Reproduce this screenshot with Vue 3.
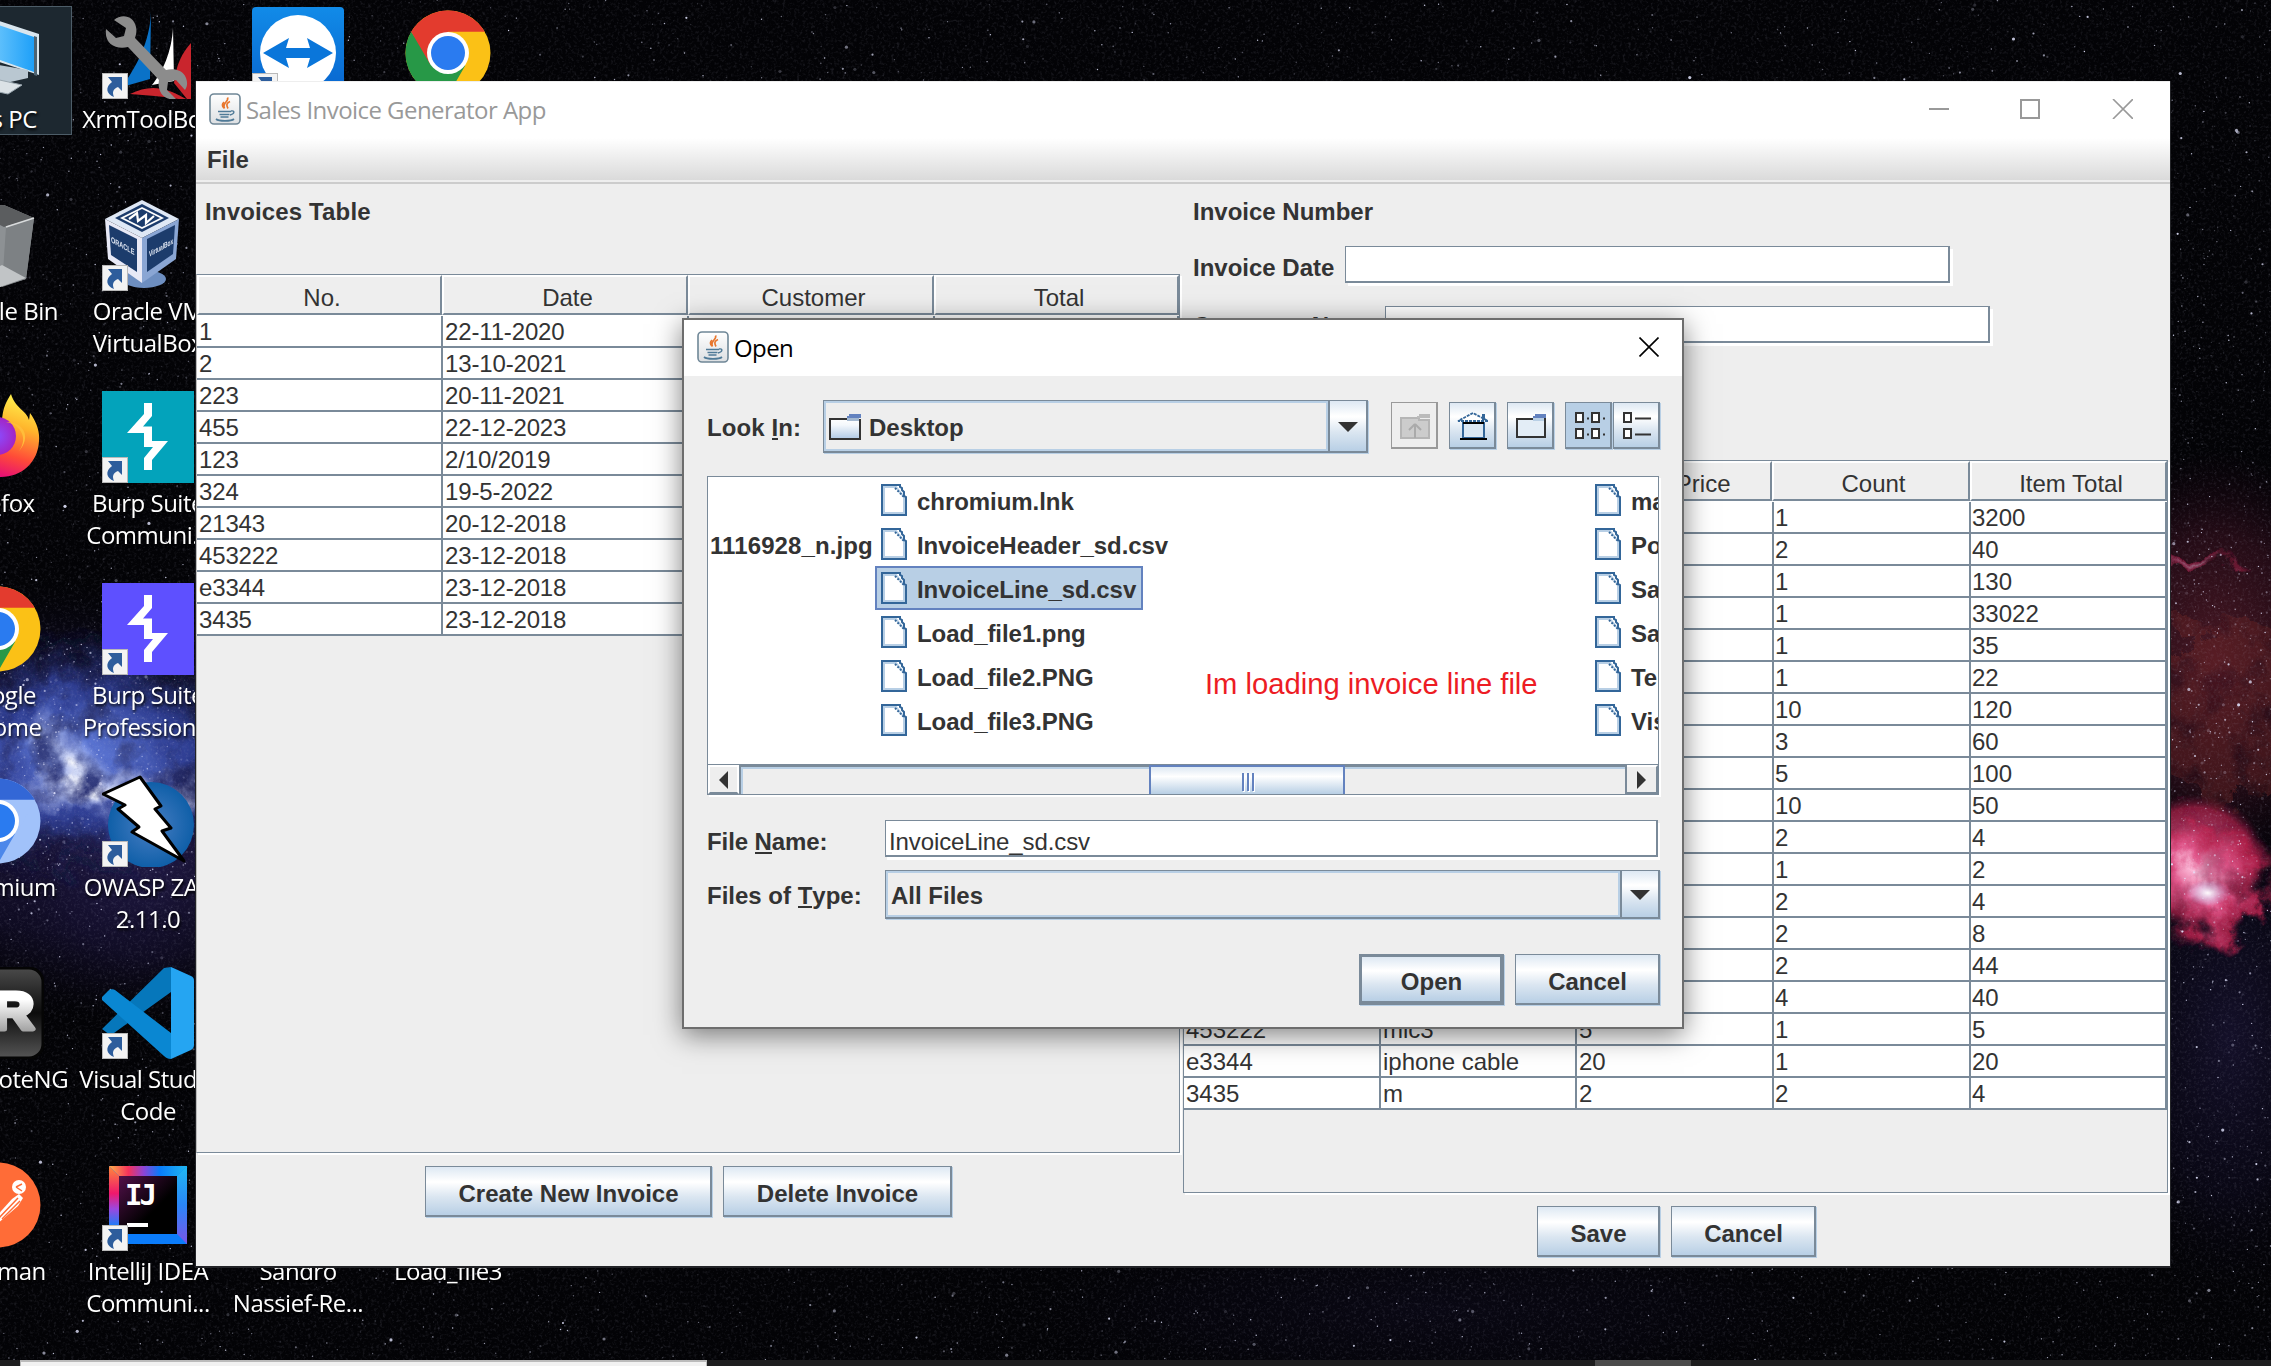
<script setup>
const invoices = [
  ['1', '22-11-2020'], ['2', '13-10-2021'], ['223', '20-11-2021'], ['455', '22-12-2023'],
  ['123', '2/10/2019'], ['324', '19-5-2022'], ['21343', '20-12-2018'], ['453222', '23-12-2018'],
  ['e3344', '23-12-2018'], ['3435', '23-12-2018'],
]
const items = [
  ['', '', '', '1', '3200'], ['', '', '', '2', '40'], ['', '', '', '1', '130'], ['', '', '', '1', '33022'],
  ['', '', '', '1', '35'], ['', '', '', '1', '22'], ['', '', '', '10', '120'], ['', '', '', '3', '60'],
  ['', '', '', '5', '100'], ['', '', '', '10', '50'], ['', '', '', '2', '4'], ['', '', '', '1', '2'],
  ['', '', '', '2', '4'], ['', '', '', '2', '8'], ['', '', '', '2', '44'], ['', '', '', '4', '40'],
  ['453222', 'mic3', '5', '1', '5'], ['e3344', 'iphone cable', '20', '1', '20'], ['3435', 'm', '2', '2', '4'],
]
const files = ['chromium.lnk', 'InvoiceHeader_sd.csv', 'InvoiceLine_sd.csv', 'Load_file1.png', 'Load_file2.PNG', 'Load_file3.PNG']
const moreFiles = ['ma', 'Po', 'Sa', 'Sa', 'Te', 'Vis']

const desktop = [
  { icon: 'pc', label: ['This PC'] }, { icon: 'bin', label: ['Recycle Bin'] }, { icon: 'firefox', label: ['Firefox'] },
  { icon: 'chrome', label: ['Google', 'Chrome'] }, { icon: 'chromium', label: ['Chromium'] },
  { icon: 'remote', label: ['mRemoteNG'] }, { icon: 'postman', label: ['Postman'] },
  { icon: 'xrm', label: ['XrmToolBox'], link: true }, { icon: 'vbox', label: ['Oracle VM', 'VirtualBox'], link: true },
  { icon: 'burp', color: '#03a3bb', label: ['Burp Suite', 'Communi...'], link: true },
  { icon: 'burp', color: '#5e50ff', label: ['Burp Suite', 'Profession...'], link: true },
  { icon: 'zap', label: ['OWASP ZAP', '2.11.0'], link: true }, { icon: 'code', label: ['Visual Studio', 'Code'], link: true },
  { icon: 'idea', label: ['IntelliJ IDEA', 'Communi...'], link: true },
  { icon: 'teamviewer', label: [], link: true }, {}, {}, {}, {}, {}, { label: ['Sandro', 'Nassief-Re...'] },
  { icon: 'chrome', label: [] }, {}, {}, {}, {}, {}, { label: ['Load_file3'] },
]

let seed = 77
const rnd = () => {
  seed = (seed * 1664525 + 1013904223) % 4294967296
  return seed / 4294967296
}
const zones = [[0, 0, 2271, 82, 420], [0, 82, 196, 1180, 900], [0, 640, 196, 240, 350], [2169, 82, 102, 1180, 560], [2169, 520, 102, 420, 220], [0, 1264, 2271, 96, 650]]
const stars = zones.flatMap(([x, y, w, h, n]) =>
  Array.from({ length: n }, () => {
    const b = rnd()
    return { x: x + rnd() * w, y: y + rnd() * h, r: b > 0.97 ? 1.6 : b > 0.85 ? 1.1 : 0.7, o: 0.15 + Math.pow(rnd(), 2) * 0.75 }
  }))
</script>

<template>
  <main class="screen">
    <svg class="sky" width="2271" height="1366" viewBox="0 0 2271 1366">
      <defs>
        <filter id="grain" x="0" y="0" width="100%" height="100%">
          <feTurbulence type="fractalNoise" baseFrequency="0.35" numOctaves="3" seed="4" />
          <feColorMatrix values="0 0 0 0 .55  0 0 0 0 .55  0 0 0 0 .7  1.6 1.2 0 0 -1.35" />
        </filter>
        <filter id="cloud" x="-40%" y="-40%" width="180%" height="180%">
          <feTurbulence type="fractalNoise" baseFrequency="0.03" numOctaves="6" seed="9" result="n" />
          <feDisplacementMap in="SourceGraphic" in2="n" scale="60" result="d" />
          <feColorMatrix in="n" values="0 0 0 0 1  0 0 0 0 1  0 0 0 0 1  3.2 0 0 0 -.75" result="m" />
          <feComposite in="d" in2="m" operator="in" />
        </filter>
        <radialGradient id="blue"><stop offset="0" stop-color="#6480e0" /><stop offset=".5" stop-color="#31429c" stop-opacity=".8" /><stop offset="1" stop-color="#0c1038" stop-opacity="0" /></radialGradient>
        <radialGradient id="violet"><stop offset="0" stop-color="#251d4c" /><stop offset=".6" stop-color="#151030" stop-opacity=".7" /><stop offset="1" stop-color="#080612" stop-opacity="0" /></radialGradient>
        <radialGradient id="pink"><stop offset="0" stop-color="#ffc4e0" /><stop offset=".35" stop-color="#e0568a" /><stop offset=".8" stop-color="#b3204a" stop-opacity=".85" /><stop offset="1" stop-color="#5a1030" stop-opacity="0" /></radialGradient>
        <radialGradient id="red"><stop offset="0" stop-color="#4a1824" /><stop offset=".6" stop-color="#2c0e1a" stop-opacity=".8" /><stop offset="1" stop-color="#1a0614" stop-opacity="0" /></radialGradient>
        <radialGradient id="white"><stop offset="0" stop-color="#fff" stop-opacity=".95" /><stop offset="1" stop-color="#b9c8ff" stop-opacity="0" /></radialGradient>
      </defs>
      <rect width="2271" height="1366" fill="#030306" />
      <ellipse cx="60" cy="800" rx="240" ry="220" fill="url(#violet)" />
      <ellipse cx="150" cy="850" rx="170" ry="180" fill="url(#violet)" opacity=".8" />
      <ellipse cx="90" cy="750" rx="200" ry="115" fill="url(#blue)" opacity=".6" />
      <g filter="url(#cloud)">
        <ellipse cx="80" cy="755" rx="210" ry="130" fill="url(#blue)" />
        <ellipse cx="75" cy="765" rx="80" ry="26" transform="rotate(48 75 765)" fill="url(#white)" />
        <ellipse cx="90" cy="790" rx="85" ry="24" fill="url(#white)" opacity=".9" />
        <ellipse cx="170" cy="785" rx="60" ry="22" fill="url(#white)" opacity=".5" />
      </g>
      <ellipse cx="1430" cy="1310" rx="420" ry="90" fill="url(#violet)" opacity=".2" />
      <ellipse cx="2230" cy="1040" rx="130" ry="260" fill="url(#violet)" opacity=".5" />
      <ellipse cx="2215" cy="660" rx="150" ry="210" fill="url(#red)" />
      <ellipse cx="2195" cy="862" rx="72" ry="68" fill="url(#pink)" opacity=".8" />
      <g filter="url(#cloud)">
        <ellipse cx="2205" cy="880" rx="74" ry="68" fill="url(#pink)" />
        <ellipse cx="2195" cy="562" rx="50" ry="9" fill="url(#pink)" opacity=".5" />
        <ellipse cx="2230" cy="710" rx="85" ry="90" fill="#6e2a26" opacity=".4" />
      </g>
      <ellipse cx="2208" cy="893" rx="22" ry="13" fill="url(#white)" />
      <rect width="2271" height="1366" filter="url(#grain)" opacity=".15" />
      <circle v-for="(s, i) in stars" :key="i" :cx="s.x" :cy="s.y" :r="s.r" fill="#e4e6ff" :opacity="s.o" />
    </svg>

    <section class="icons">
      <div v-for="(d, i) in desktop" :key="i" class="shortcut">
        <div v-if="d.icon === 'pc'" class="selection"></div>
        <div class="glyph">
          <svg v-if="d.icon === 'pc'" width="92" height="92" viewBox="0 0 92 92">
            <defs><linearGradient id="scr" x1="0" x2="1"><stop offset="0" stop-color="#8fd8ff" /><stop offset="1" stop-color="#1ea0f8" /></linearGradient></defs>
            <path d="M20 5l67 22v41L20 46z" fill="#d9e6ee" /><path d="M20 9l62 21v35L20 43z" fill="url(#scr)" /><path d="M82 29l3 1v39l-3-1z" fill="#4e6472" />
            <path d="M46 58l30 5v8l-22 5-18-6z" fill="#b9c7d1" /><path d="M34 70l36 8-14 9-42-9z" fill="#dbe2e6" stroke="#9aa7af" />
          </svg>
          <svg v-else-if="d.icon === 'bin'" width="92" height="92" viewBox="0 0 92 92">
            <path d="M10 8l42-2 30 13-8 61-26 8-32-4z" fill="#8d9194" /><path d="M10 8l42-2 30 13-30 9z" fill="#5b5d5f" /><path d="M54 28l28-9-8 61-24 8z" fill="#7d8184" /><path d="M50 66l24 13-26 9-32-4z" fill="#c1c4c6" /><path d="M54 28l28-9" stroke="#d8dadb" fill="none" stroke-width="1.5" />
          </svg>
          <svg v-else-if="d.icon === 'firefox'" width="92" height="92" viewBox="0 0 92 92">
            <defs>
              <linearGradient id="ff" x1=".7" y1="0" x2=".4" y2="1"><stop offset="0" stop-color="#fff44f" /><stop offset=".35" stop-color="#ffb52c" /><stop offset=".7" stop-color="#ff4b38" /><stop offset="1" stop-color="#e3067e" /></linearGradient>
              <radialGradient id="ffp"><stop offset="0" stop-color="#8a4dff" /><stop offset="1" stop-color="#a324c4" /></radialGradient>
            </defs>
            <path d="M50 32C50 16 56 8 59 3c4 14 16 17 18 26l1-7c6 8 10 18 9 28C86 72 69 86 49 86S11 72 9 50c-1-14 4-25 12-34 3 8 10 10 29 16z" fill="url(#ff)" />
            <circle cx="45" cy="45" r="19" fill="url(#ffp)" /><path d="M54 31c16 3 22 17 13 29 12-13 6-29-13-29z" fill="#ffbd3a" />
          </svg>
          <svg v-else-if="d.icon === 'chrome' || d.icon === 'chromium'" width="92" height="92" viewBox="0 0 92 92">
            <circle cx="46" cy="46" r="42.5" :fill="d.icon === 'chrome' ? '#fbc116' : '#a1c2fa'" />
            <path d="M46 46H24.400L9.200 24.700A42.500 42.500 0 0 0 46 88.500L64.400 56.600z" :fill="d.icon === 'chrome' ? '#279847' : '#4c87ea'" />
            <path d="M46 24.700h36.800L64 60z" :fill="d.icon === 'chrome' ? '#fbc116' : '#a1c2fa'" />
            <path d="M9.200 24.700A42.500 42.500 0 0 1 82.800 24.700H46L28 57z" :fill="d.icon === 'chrome' ? '#e33b2e' : '#3367d6'" />
            <circle cx="46" cy="46" r="21" fill="#fff" /><circle cx="46" cy="46" r="17" fill="#2a7bf0" />
          </svg>
          <svg v-else-if="d.icon === 'remote'" width="92" height="92" viewBox="0 0 92 92">
            <defs>
              <linearGradient id="rm" x2="0" y2="1"><stop offset="0" stop-color="#4a4a4a" /><stop offset=".5" stop-color="#0c0c0c" /><stop offset="1" stop-color="#555" /></linearGradient>
              <linearGradient id="rt" x2="0" y2="1"><stop offset=".3" stop-color="#fff" /><stop offset="1" stop-color="#888" /></linearGradient>
            </defs>
            <rect x="1" y="1" width="90" height="90" rx="14" fill="url(#rm)" stroke="#050505" stroke-width="3" />
            <text x="40" y="62" font-family="Liberation Sans, sans-serif" font-weight="700" font-size="52" textLength="42" lengthAdjust="spacingAndGlyphs" fill="url(#rt)" stroke="url(#rt)" stroke-width="5" stroke-linejoin="round">R</text>
          </svg>
          <svg v-else-if="d.icon === 'postman'" width="92" height="92" viewBox="0 0 92 92">
            <circle cx="46" cy="46" r="42.500" fill="#ff6c37" /><path d="M40 62l20-22 7-5 4 4-5 8-21 18z" fill="#fff" /><path d="M46 60l20-21M50 60l18-18" stroke="#ff6c37" stroke-width="1.500" /><circle cx="67" cy="28" r="7" fill="#fff" /><path d="M64 28l6-3M64 28l6 4" stroke="#ff6c37" stroke-width="1.500" />
          </svg>
          <svg v-else-if="d.icon === 'xrm'" width="92" height="92" viewBox="0 0 92 92">
            <path d="M49 5C48 35 34 60 20 80l28-8z" fill="#0a72c8" /><path d="M71 20C70 45 60 66 50 78l22-4z" fill="#fff" /><path d="M89 36C80 46 74 58 72 76l17 21z" fill="#c9252d" /><path d="M28 87c20-10 36-8 61 8-20-6-40-6-61-8z" fill="#c9252d" />
            <path d="M12 13c8-7 20-4 22 7 1 4 0 8-1 11l31 32c8-2 17 0 20 8 2 5 1 9-1 12l-9-10-8 2-1 8 9 9c-13 2-19-8-17-19L26 40C14 43 2 37 4 22l10 9 8-2 2-8z" fill="#8c8c8c" />
          </svg>
          <svg v-else-if="d.icon === 'vbox'" width="92" height="92" viewBox="0 0 92 92">
            <ellipse cx="42" cy="80" rx="22" ry="9" fill="#6d8ec0" />
            <path d="M40 1L3 20l37 19 37-19z" fill="#dfe8f5" /><path d="M3 20l37 19v45L6 60z" fill="#e8e9f6" /><path d="M77 20L40 39v45l34-24z" fill="#8aa6d4" />
            <path d="M40 5L13 19l27 14 27-14z" fill="#1c3c6c" /><path d="M40 9L20 19l20 10 20-10z" fill="none" stroke="#fff" stroke-width="1.800" /><path d="M27 20l8-6 1 8 8-6 0 8 8-7" fill="none" stroke="#fff" stroke-width="2.200" />
            <path d="M7 26l28 14v33L9 56z" fill="#1c3c6c" /><path d="M73 26L45 40v33l26-18z" fill="#1c3c6c" />
            <text transform="matrix(.9 .5 0 1 9 43)" font-family="Liberation Sans, sans-serif" font-size="8" font-weight="700" textLength="26" lengthAdjust="spacingAndGlyphs" fill="#dfe6f2">ORACLE</text>
            <text transform="matrix(.9 -.5 0 1 47 58)" font-family="Liberation Sans, sans-serif" font-size="8" font-weight="700" textLength="27" lengthAdjust="spacingAndGlyphs" fill="#dfe6f2">VirtualBox</text>
          </svg>
          <svg v-else-if="d.icon === 'burp'" width="92" height="92" viewBox="0 0 92 92">
            <rect width="92" height="92" :fill="d.color" /><path d="M42 12h8v13L41 35.500h9V50h16L50 69v10h-8V67l9-11h-9V42H25l17-19z" fill="#fff" />
          </svg>
          <svg v-else-if="d.icon === 'zap'" width="92" height="92" viewBox="0 0 92 92">
            <defs><radialGradient id="zp"><stop offset="0" stop-color="#4a7fc4" /><stop offset="1" stop-color="#0f5fa8" /></radialGradient></defs>
            <circle cx="49" cy="50" r="43" fill="url(#zp)" /><path d="M1 19L38 2l21 29-6 3 16 19-9 3 22 30L30 57l7-5-21-18 7-4z" fill="#fff" stroke="#000" stroke-width="3" stroke-linejoin="round" />
          </svg>
          <svg v-else-if="d.icon === 'code'" width="92" height="92" viewBox="0 0 92 92">
            <path d="M0 62l62-61 7-1v25L12 66c-3 2-6 1-8-1z" fill="#0677bb" /><path d="M0 30l6-6c2-2 5-2 7-1l56 43v26c-3 0-5-1-7-3L0 33z" fill="#0a87d2" /><path d="M69 0l20 9c2 1 3 2 3 5v64c0 2-1 4-3 5l-20 9z" fill="#25a5f2" />
          </svg>
          <svg v-else-if="d.icon === 'idea'" width="92" height="92" viewBox="0 0 92 92">
            <defs>
              <linearGradient id="ijt" x2="1"><stop offset="0" stop-color="#ffb24a" /><stop offset=".25" stop-color="#f5325c" /><stop offset=".45" stop-color="#8b45d8" /><stop offset=".65" stop-color="#087cfa" /><stop offset="1" stop-color="#20b8f0" /></linearGradient>
              <linearGradient id="ijl" x2="0" y2="1"><stop offset="0" stop-color="#ff8a3a" /><stop offset=".35" stop-color="#f0186c" /><stop offset=".55" stop-color="#9a48e0" /><stop offset=".8" stop-color="#0a84fa" /></linearGradient>
              <linearGradient id="ijr" x2="0" y2="1"><stop offset="0" stop-color="#20b8f0" /><stop offset=".5" stop-color="#2a86f8" /><stop offset="1" stop-color="#7a55e8" /></linearGradient>
              <linearGradient id="ijb" x2="1" y2="1"><stop offset="0" stop-color="#52104a" /><stop offset=".6" stop-color="#000" /></linearGradient>
            </defs>
            <rect x="7" y="7" width="78" height="78" fill="#0b7cfa" /><path d="M7 7h78L75 17H17z" fill="url(#ijt)" /><path d="M7 7l10 10v58L7 85z" fill="url(#ijl)" /><path d="M85 7L75 17v58l10 10z" fill="url(#ijr)" /><rect x="17" y="17" width="58" height="58" fill="url(#ijb)" />
            <text x="23" y="46" font-family="DejaVu Sans Mono, monospace" font-weight="700" font-size="29" textLength="32" fill="#fff">IJ</text><rect x="25" y="64" width="21" height="4" fill="#fff" />
          </svg>
          <svg v-else-if="d.icon === 'teamviewer'" width="92" height="92" viewBox="0 0 92 92">
            <defs><linearGradient id="tv" x2="0" y2="1"><stop offset="0" stop-color="#118be8" /><stop offset="1" stop-color="#0863cd" /></linearGradient></defs>
            <rect width="92" height="92" rx="4" fill="url(#tv)" /><circle cx="46" cy="46" r="38" fill="#fff" /><path d="M11 46l26-15-3 10h24l-3-10 26 15-26 15 3-10H34l3 10z" fill="#0a76da" />
          </svg>
          <svg v-if="d.link" class="badge" width="26" height="26" viewBox="0 0 26 26">
            <rect x=".5" y=".5" width="25" height="25" fill="#f3f3f3" stroke="#b9b9b9" /><path d="M6 4h14v14l-4-4c-5 2-6 5-4 10C4 21 3 14 10 9z" fill="#2d5d9c" />
          </svg>
        </div>
        <p v-for="l in d.label" :key="l" class="name">{{ l }}</p>
      </div>
    </section>

    <footer class="taskbar"><i class="search"></i><i class="active"></i></footer>

    <section class="win">
      <header class="title">
        <svg width="32" height="32" viewBox="0 0 32 32" class="java"><use href="#java" /></svg>
        <span class="cap">Sales Invoice Generator App</span>
        <svg width="204" height="20" viewBox="0 0 204 20" class="ctl" fill="none" stroke="#999"><path d="M0 10h20" stroke-width="2" /><path d="M92 1h18v18H92z" stroke-width="2" /><path d="M184 0l20 20M204 0l-20 20" stroke-width="1.600" /></svg>
      </header>
      <nav class="menu">File</nav>
      <div class="body">
        <div class="left">
          <b class="lbl">Invoices Table</b>
          <div class="pane lp">
            <div class="grid hd g4"><span>No.</span><span>Date</span><span>Customer</span><span>Total</span></div>
            <div v-for="(r, i) in invoices" :key="i" class="grid row g4b"><span>{{ r[0] }}</span><span>{{ r[1] }}</span><span></span><span></span></div>
          </div>
          <div class="btns lb"><button class="w287">Create New Invoice</button><button class="w229">Delete Invoice</button></div>
        </div>
        <div class="right">
          <b class="lbl">Invoice Number</b>
          <div class="field f1"><b>Invoice Date</b><i></i></div>
          <div class="field f2"><b>Customer Name</b><i></i></div>
          <div class="pane rp">
            <div class="grid hd g5"><span>No.</span><span>Item Name</span><span>Item Price</span><span>Count</span><span>Item Total</span></div>
            <div v-for="(r, i) in items" :key="i" class="grid row g5b"><span v-for="(c, j) in r" :key="j">{{ c }}</span></div>
          </div>
          <div class="btns rb"><button class="w123">Save</button><button class="w145">Cancel</button></div>
        </div>
      </div>
    </section>

    <section class="dialog">
      <header class="dtitle">
        <svg width="32" height="32" viewBox="0 0 32 32">
          <defs>
            <linearGradient id="jb" x2="0" y2="1"><stop offset="0" stop-color="#fff" /><stop offset="1" stop-color="#dcdfe2" /></linearGradient>
            <g id="java">
              <rect x="1" y="1" width="30" height="30" rx="4" fill="url(#jb)" stroke="#6f8797" stroke-width="1.600" />
              <path d="M18.500 4.500c2 4-6 5.500-3 11M21 8.500c-3.500 1.500-4 3.500-2 7M15 9c-2 2-2 4 0 6" fill="none" stroke="#e8762d" stroke-width="1.700" />
              <path d="M9 18.500h13M10.500 21.500h10M11.500 24h8" stroke="#4f7a97" stroke-width="1.700" fill="none" /><path d="M22 18c4-1 4 3-1 4" stroke="#4f7a97" stroke-width="1.400" fill="none" /><path d="M7 26c3 2.500 15 2.500 18 0" stroke="#4f7a97" stroke-width="1.700" fill="none" />
            </g>
            <g id="file"><path d="M1 1h18l6 12v18H1z" fill="#fff" /><path d="M3 3h12l8 10v16H3z" fill="#fff" stroke="#b8cfe5" stroke-width="2" /><path d="M19 1H1v30h24V13l-2-1V8l-2-2V4l-2-1z" fill="none" stroke="#336699" stroke-width="2" /><path d="M14 4l9 9" stroke="#336699" stroke-width="2" stroke-dasharray="2 1.500" /></g>
            <linearGradient id="fg" x2="0" y2="1"><stop offset="0" stop-color="#fff" /><stop offset=".3" stop-color="#f4f8fc" /><stop offset="1" stop-color="#b0cae6" /></linearGradient>
          </defs>
          <use href="#java" />
        </svg>
        <span>Open</span>
        <svg class="x" width="20" height="20" viewBox="0 0 20 20"><path d="M.5.500l19 19M19.500.500l-19 19" stroke="#000" stroke-width="1.600" /></svg>
      </header>
      <div class="look">
        <b class="dl">Look <u>I</u>n:</b>
        <div class="combo c1">
          <span><svg width="32" height="26" viewBox="0 0 32 26"><path d="M1 5h18v1h12v19H1z" fill="url(#fg)" stroke="#333" stroke-width="2" /><path d="M20 0h12v4H18V2h2z" fill="#6382bf" /><path d="M18 4h12v3H18z" fill="#a3b8d0" /></svg>Desktop</span>
          <em></em>
        </div>
        <div class="tools">
          <i class="tb off"><svg width="32" height="28" viewBox="0 0 32 28"><path d="M2 6h18v2h10v18H2z" fill="#ccc" stroke="#b5b5b5" stroke-width="2" /><path d="M20 2h11v4H18V4h2z" fill="#bbb" /><path d="M16 12v14M16 12l-6 6M16 12l6 6" stroke="#aaa" stroke-width="2" fill="none" /></svg></i>
          <i class="tb"><svg width="32" height="28" viewBox="0 0 32 28"><path d="M16 1L1 9h30z" fill="#fff" stroke="#336699" stroke-width="1.800" stroke-dasharray="3 1" /><path d="M25 2h3v6h-3z" fill="#336699" /><path d="M6 11h21v15H6z" fill="#dbe8f4" stroke="#336699" stroke-width="2" /><path d="M6 11h21M3 27h27" stroke="#000" stroke-width="2" /></svg></i>
          <i class="tb"><svg width="32" height="28" viewBox="0 0 32 28"><path d="M2 7h28v18H2z" fill="#e3edf6" stroke="#333" stroke-width="2" /><path d="M20 2h11v4H18V4h2z" fill="#6382bf" /><path d="M18 6h11v3H18z" fill="#b8cfe5" /></svg></i>
          <i class="tb on"><svg width="32" height="28" viewBox="0 0 32 28" fill="#fff" stroke="#333" stroke-width="2"><path d="M3 1h7v9H3zM19 1h7v9h-7zM3 17h7v9H3zM19 17h7v9h-7z" /><path d="M14 6.500h2M30 6.500h2M14 22.500h2M30 22.500h2" /></svg></i>
          <i class="tb last"><svg width="32" height="28" viewBox="0 0 32 28" fill="#fff" stroke="#333" stroke-width="2"><path d="M3 1h7v9H3zM3 17h7v9H3z" /><path d="M14 6.500h16M14 22.500h16" /></svg></i>
        </div>
      </div>
      <div class="files">
        <div class="list">
          <div class="cola"><b>1116928_n.jpg</b></div>
          <ul class="colb">
            <li v-for="(f, i) in files" :key="f" :class="{ sel: i === 2 }"><svg width="26" height="32" viewBox="0 0 26 32"><use href="#file" /></svg><span>{{ f }}</span></li>
          </ul>
          <p class="note">Im loading invoice line file</p>
          <ul class="colc">
            <li v-for="(f, i) in moreFiles" :key="i"><svg width="26" height="32" viewBox="0 0 26 32"><use href="#file" /></svg><span>{{ f }}</span></li>
          </ul>
        </div>
        <div class="scroll">
          <i class="sb"><svg width="9" height="18" viewBox="0 0 9 18"><path d="M9 0v18L0 9z" fill="#333" /></svg></i>
          <div class="track"><i class="thumb"><s></s><s></s><s></s></i></div>
          <i class="sb r"><svg width="9" height="18" viewBox="0 0 9 18"><path d="M0 0v18l9-9z" fill="#333" /></svg></i>
        </div>
      </div>
      <div class="frow n"><b class="dl">File <u>N</u>ame:</b><div class="input">InvoiceLine_sd.csv</div></div>
      <div class="frow t"><b class="dl">Files of <u>T</u>ype:</b><div class="combo c2"><span>All Files</span><em></em></div></div>
      <div class="btns db"><button class="w145 def">Open</button><button class="w145">Cancel</button></div>
    </section>
  </main>
</template>

<style>
body { margin: 0; background: #000; }
</style>

<style scoped>
* { box-sizing: border-box; }
.screen { position: relative; width: 2271px; height: 1366px; overflow: hidden; font: 24px/28px "Liberation Sans", Arial, sans-serif; color: #333; }
i, em { font-style: normal; display: block; }
.sky { position: absolute; inset: 0; }
.icons { position: absolute; left: -77px; top: 0; display: grid; grid-auto-flow: column; grid-template-rows: repeat(7, 192px); grid-auto-columns: 150px; }
.shortcut { position: relative; padding-top: 7px; display: flex; flex-direction: column; align-items: center; }
.selection { position: absolute; left: 0; top: 6px; width: 149px; height: 129px; background: #1d2830; border: 1.500px solid #4d5d68; }
.glyph { position: relative; width: 92px; height: 92px; margin-bottom: 4px; flex: none; }
.glyph svg { display: block; }
.glyph .badge { position: absolute; left: 0; bottom: 0; }
.name { position: relative; margin: 0; height: 32px; font: 24px/32px "Open Sans", "Noto Sans", sans-serif; letter-spacing: -.5px; color: #fff; white-space: nowrap; text-shadow: 1px 2px 3px #000; }
.taskbar { position: absolute; left: 0; bottom: 0; width: 100%; height: 6px; background: #1e1e1f; display: flex; }
.search { margin-left: 20px; width: 687px; background: #f2f2f2; border: 1px solid #bbb; border-top-width: 2px; border-bottom: 0; }
.active { margin-left: 888px; width: 96px; background: #4b4b4b; }

.win { position: absolute; left: 195px; top: 81px; width: 1976px; height: 1187px; padding: 1px 0 0; background: #eee; border: solid #222327; border-width: 0 1px 2px 1px; display: flex; flex-direction: column; }
.title { height: 56px; background: #fff; display: flex; align-items: flex-start; padding: 11px 37px 0 13px; flex: none; }
.cap { font: 24px/32px "Open Sans", "Noto Sans", sans-serif; color: #999; margin-left: 5px; letter-spacing: -.55px; margin-top: 1px; }
.ctl { margin-left: auto; margin-top: 6px; }
.menu { height: 46px; flex: none; background: linear-gradient(#fff, #dadada 42px, #eee 42px, #eee 44px, #ccc 44px); font-weight: 700; padding: 8px 11px 0; letter-spacing: .2px; }
.body { flex: 1; display: flex; }
.left { width: 985px; display: flex; flex-direction: column; }
.right { width: 985px; margin-left: 2px; display: flex; flex-direction: column; }
.lbl { display: block; padding-top: 14px; padding-left: 9px; height: 90px; }
.left .lbl { letter-spacing: .15px; }
.right .lbl { padding-left: 10px; height: 62px; }
.pane { border: 1px solid #7a8a99; box-shadow: 2px 2px 0 #fff; }
.lp { width: 984px; height: 879px; border-left-color: #bbb; }
.rp { width: 985px; height: 733px; }
.grid { display: grid; }
.hd { height: 41px; line-height: 28px; border-bottom: 1px solid #fff; }
.hd span { border: 2px solid #7a8a99; border-top-color: #fff; border-left-color: #fff; text-align: center; padding: 7px 0 0 5px; }
.g4 { grid-template-columns: 245px 246px 246px 245px; }
.g4b { grid-template-columns: 246px 246px 246px 244px; }
.g5 { grid-template-columns: 196px 196px 196px 198px 197px; }
.g5b { grid-template-columns: 197px 196px 197px 197px 196px; }
.row span { height: 32px; background: #fff; border: solid #7a8a99; border-width: 0 2px 2px 0; line-height: 31px; padding-left: 2px; white-space: nowrap; }
.g4b span { letter-spacing: -.15px; }
.g5b span:nth-child(n + 4) { padding-left: 1px; }
.btns { display: flex; }
.lb { margin: 13px 0 0 229px; gap: 11px; }
.rb { margin: 13px 0 0 354px; gap: 11px; }
button { font: 700 24px/28px "Liberation Sans", Arial, sans-serif; color: #333; height: 51px; padding: 6px 0 0 1px; border: 1px solid #7a8a99; border-right-width: 2px; border-bottom-width: 2px; background: linear-gradient(#dde8f3, #fff 30%, #fff 32%, #dbe6f1 62%, #b8cfe5); box-shadow: 1px 1px 0 #b8cfe5; }
.w287 { width: 287px; } .w229 { width: 229px; } .w123 { width: 123px; } .w145 { width: 145px; }
.def { border-width: 3px 4px 4px 3px; }
.field { display: flex; align-items: flex-start; padding-left: 10px; height: 60px; }
.field b { padding-top: 8px; white-space: nowrap; overflow: hidden; }
.field i { width: 605px; height: 37px; background: #fff; border: 1px solid #7a8a99; border-right-width: 2px; border-bottom-width: 2px; box-shadow: 3px 3px 0 #fff; }
.f1 b { width: 152px; } .f2 b { width: 192px; padding-top: 6px; }
.f2 { height: 154px; }

.dialog { position: absolute; left: 682px; top: 318px; width: 1002px; height: 711px; border: 2px solid #6d6d6d; background: #eee; box-shadow: 0 6px 26px rgba(0, 0, 0, .5); display: flex; flex-direction: column; }
.dtitle { height: 56px; background: #fff; display: flex; padding: 11px 23px 0 13px; color: #000; flex: none; }
.dtitle span { font: 24px/32px "Open Sans", "Noto Sans", sans-serif; margin-left: 5px; margin-top: 1px; letter-spacing: -.6px; }
.x { margin-left: auto; margin-top: 6px; }
.look { display: flex; padding: 24px 22px 0 23px; height: 100px; }
.dl { white-space: nowrap; }
u { text-decoration: none; border-bottom: 2px solid #333; display: inline-block; height: 26px; vertical-align: top; }
.look .dl { width: 116px; padding-top: 14px; letter-spacing: .1px; }
.combo { display: flex; border: solid #7a8a99; border-width: 1px 2px 2px 1px; box-shadow: 1px 1px 0 #b8cfe5; font-weight: 700; }
.combo span { flex: 1; border: 2px solid #b8cfe5; display: flex; align-items: center; padding-top: 4px; }
.combo em { border-left: 2px solid #7a8a99; width: 38px; background: linear-gradient(#dde8f3, #fff 30%, #fff 32%, #dbe6f1 62%, #b8cfe5); display: flex; align-items: center; justify-content: center; }
.combo em::after { content: ""; border: 10px solid transparent; border-top-color: #333; border-bottom: 0; margin-top: 2px; }
.c1 { width: 545px; height: 53px; } .c1 svg { margin: -3px 8px 0 3px; }
.tools { display: flex; margin: 2px 0 0 23px; gap: 11px; }
.tb { width: 47px; height: 47px; border: 1px solid #7a8a99; border-right-width: 2px; border-bottom-width: 2px; background: linear-gradient(#dde8f3, #fff 30%, #fff 32%, #dbe6f1 62%, #b8cfe5); box-shadow: 1px 1px 0 #b8cfe5; display: flex; align-items: center; justify-content: center; padding: 2px 0 0 1px; }
.off { background: #eee; border-color: #999; box-shadow: none; }
.on { background: #b8cfe5; } .last { margin-left: -10px; }
.files { margin-left: 23px; width: 952px; height: 319px; border: 1px solid #7a8a99; box-shadow: 2px 2px 0 #fff; background: #fff; display: flex; flex-direction: column; font-weight: 700; flex: none; }
.list { display: flex; height: 287px; overflow: hidden; position: relative; }
.cola { width: 167px; padding-left: 2px; padding-top: 55px; flex: none; letter-spacing: .1px; }
ul { list-style: none; margin: 0; padding: 1px 0 0; }
li { height: 44px; display: flex; align-items: center; gap: 10px; border: 2px solid transparent; padding: 0 4px; white-space: nowrap; line-height: 28px; }
li svg { flex: none; margin-top: -1px; }
li span { padding-top: 3px; letter-spacing: -.05px; }
.colb { width: 714px; flex: none; } .colb li { width: 268px; }
.colc { flex: none; }
.sel { background: #b8cfe5; border-color: #6382bf; }
.note { position: absolute; left: 497px; top: 189px; margin: 0; font: 29.200px/36px "Liberation Sans", Arial, sans-serif; color: #ed1c24; white-space: nowrap; }
.scroll { display: flex; height: 30px; border-top: 1px solid #7a8a99; }
.sb { width: 31px; background: #eee; border: 2px solid #fff; border-bottom-color: #7a8a99; display: flex; align-items: center; justify-content: center; flex: none; }
.sb.r { border-left: 0; border-right: 2px solid #7a8a99; }
.track { flex: 1; background: #eee; border: 2px solid #7a8a99; border-bottom: 0; box-shadow: inset 2px 2px 0 #b8cfe5; }
.thumb { margin: -2px 0 0 408px; width: 196px; height: 29px; border: 2px solid #6382bf; border-bottom: 0; background: linear-gradient(#dde8f3, #fff 35%, #b8cfe5); display: flex; justify-content: center; gap: 3px; padding: 6px 0 0 2px; }
.thumb s { width: 2px; height: 18px; background: #6382bf; box-shadow: 1px 1px 0 #fff; }
.frow { display: flex; padding-left: 23px; }
.n { margin-top: 25px; } .n .dl { width: 178px; padding-top: 8px; letter-spacing: -.1px; }
.input { width: 773px; height: 37px; background: #fff; border: 1px solid #7a8a99; border-right-width: 2px; border-bottom-width: 2px; box-shadow: 2px 3px 0 #fff; padding: 7px 3px 0; margin-bottom: 13px; letter-spacing: -.1px; }
.t .dl { width: 178px; padding-top: 12px; }
.c2 { width: 775px; height: 49px; } .c2 span { padding-left: 3px; }
.db { margin: 35px 0 0 675px; gap: 11px; }
</style>
